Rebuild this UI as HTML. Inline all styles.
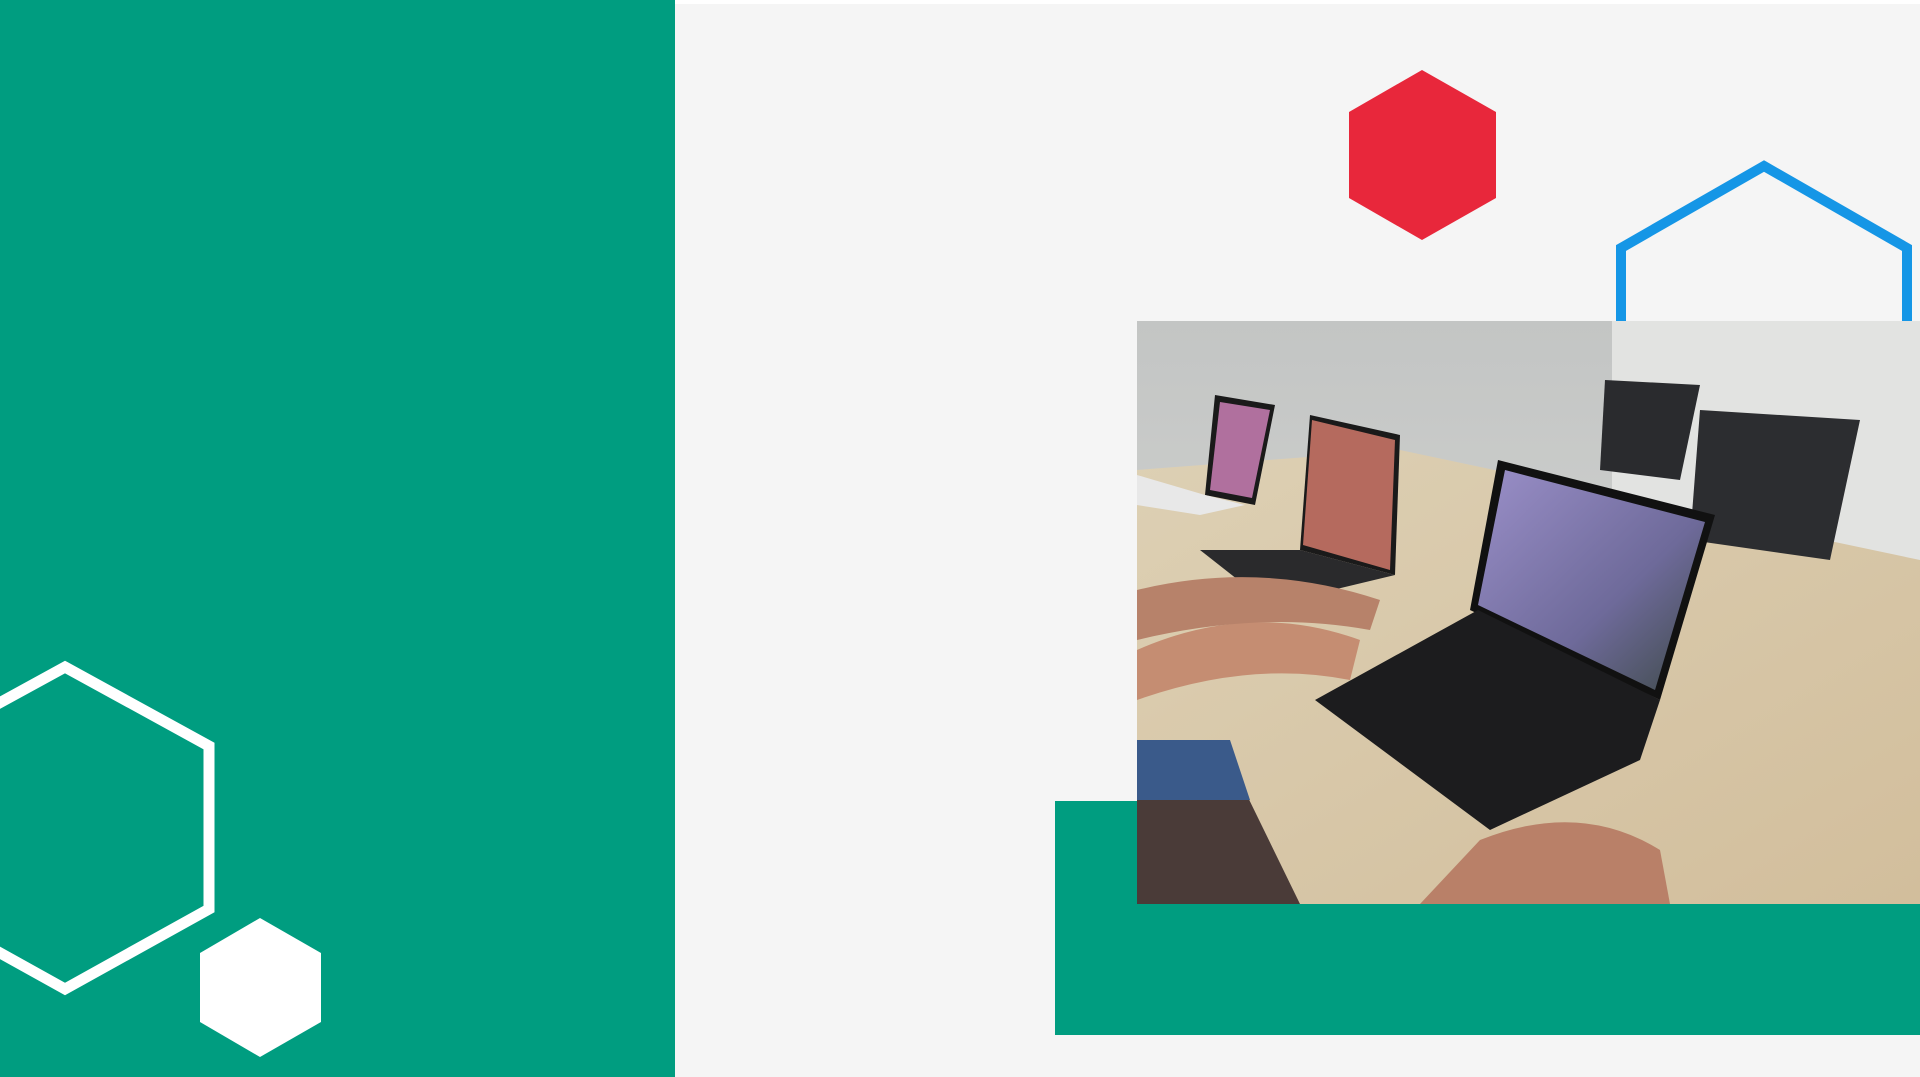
<!DOCTYPE html>
<html><head><meta charset="utf-8"><style>
html,body{margin:0;padding:0;width:1920px;height:1077px;overflow:hidden;background:#f5f5f5;position:relative}
.top{position:absolute;left:0;top:0;width:1920px;height:4px;background:#fff}
.green{position:absolute;left:0;top:0;width:675px;height:1077px;background:#009d80}
.grect{position:absolute;left:1055px;top:801px;width:865px;height:234px;background:#009d80}
svg{position:absolute;left:0;top:0}
</style></head><body>
<div class="top"></div>
<div class="green"></div>
<div class="grect"></div>
<svg width="1920" height="1077" viewBox="0 0 1920 1077">
  <polygon points="1422,70 1496,112 1496,198 1422,240 1349,198 1349,112" fill="#e8273b"/>
  <polygon points="1764,166 1907,248 1907,420 1621,420 1621,248" fill="none" stroke="#1596e6" stroke-width="10"/>
  <polygon points="65,667 209,746 209,909 65,989 -79,909 -79,746" fill="none" stroke="#fff" stroke-width="11"/>
  <polygon points="260,918 321,953 321,1022 260,1057 200,1022 200,953" fill="#fff"/>
  <defs>
    <linearGradient id="wall" x1="0" y1="0" x2="0" y2="1"><stop offset="0" stop-color="#c3c5c4"/><stop offset="1" stop-color="#d9dad7"/></linearGradient>
    <linearGradient id="tab" x1="0" y1="0" x2="1" y2="1"><stop offset="0" stop-color="#ddd0b4"/><stop offset="1" stop-color="#d2be9c"/></linearGradient>
    <linearGradient id="scr" x1="0" y1="0" x2="1" y2="1"><stop offset="0" stop-color="#9a8fc8"/><stop offset="0.6" stop-color="#6e6a9a"/><stop offset="1" stop-color="#3e4a48"/></linearGradient>
    <clipPath id="pc"><rect x="1137" y="321" width="783" height="583"/></clipPath>
  </defs>
  <g clip-path="url(#pc)">
    <rect x="1137" y="321" width="783" height="583" fill="url(#wall)"/>
    <rect x="1612" y="321" width="308" height="300" fill="#e2e3e1"/>
    <polygon points="1137,470 1400,450 1920,560 1920,904 1137,904" fill="url(#tab)"/>
    <polygon points="1137,740 1220,740 1300,904 1137,904" fill="#4a3b38"/>
    <polygon points="1605,380 1700,385 1680,480 1600,470" fill="#2a2b2e"/>
    <polygon points="1700,410 1860,420 1830,560 1690,540" fill="#2c2d30"/>
    <polygon points="1498,460 1715,515 1660,700 1470,610" fill="#111"/>
    <polygon points="1505,470 1705,522 1655,690 1478,605" fill="url(#scr)"/>
    <polygon points="1478,610 1660,700 1640,760 1490,830 1315,700" fill="#1c1c1e"/>
    <polygon points="1310,415 1400,435 1395,575 1300,550" fill="#1a1a1a"/>
    <polygon points="1312,420 1395,440 1390,570 1303,545" fill="#b56a5e"/>
    <polygon points="1200,550 1300,550 1395,575 1270,605" fill="#2a2a2c"/>
    <polygon points="1215,395 1275,405 1255,505 1205,495" fill="#1a1a1a"/>
    <polygon points="1220,402 1270,410 1252,498 1210,490" fill="#b0709e"/>
    <polygon points="1137,475 1205,495 1245,505 1200,515 1137,505" fill="#e8e8e8"/>
    <path d="M1137,650 Q1250,600 1360,640 L1350,680 Q1250,660 1137,700Z" fill="#c58d72"/>
    <path d="M1137,590 Q1260,560 1380,600 L1370,630 Q1260,610 1137,640Z" fill="#b7826a"/>
    <path d="M1137,740 L1230,740 L1250,800 L1137,800Z" fill="#3a5a8a"/>
    <path d="M1480,840 Q1580,800 1660,850 L1670,904 L1420,904Z" fill="#b98068"/>
  </g>
</svg>
</body></html>
